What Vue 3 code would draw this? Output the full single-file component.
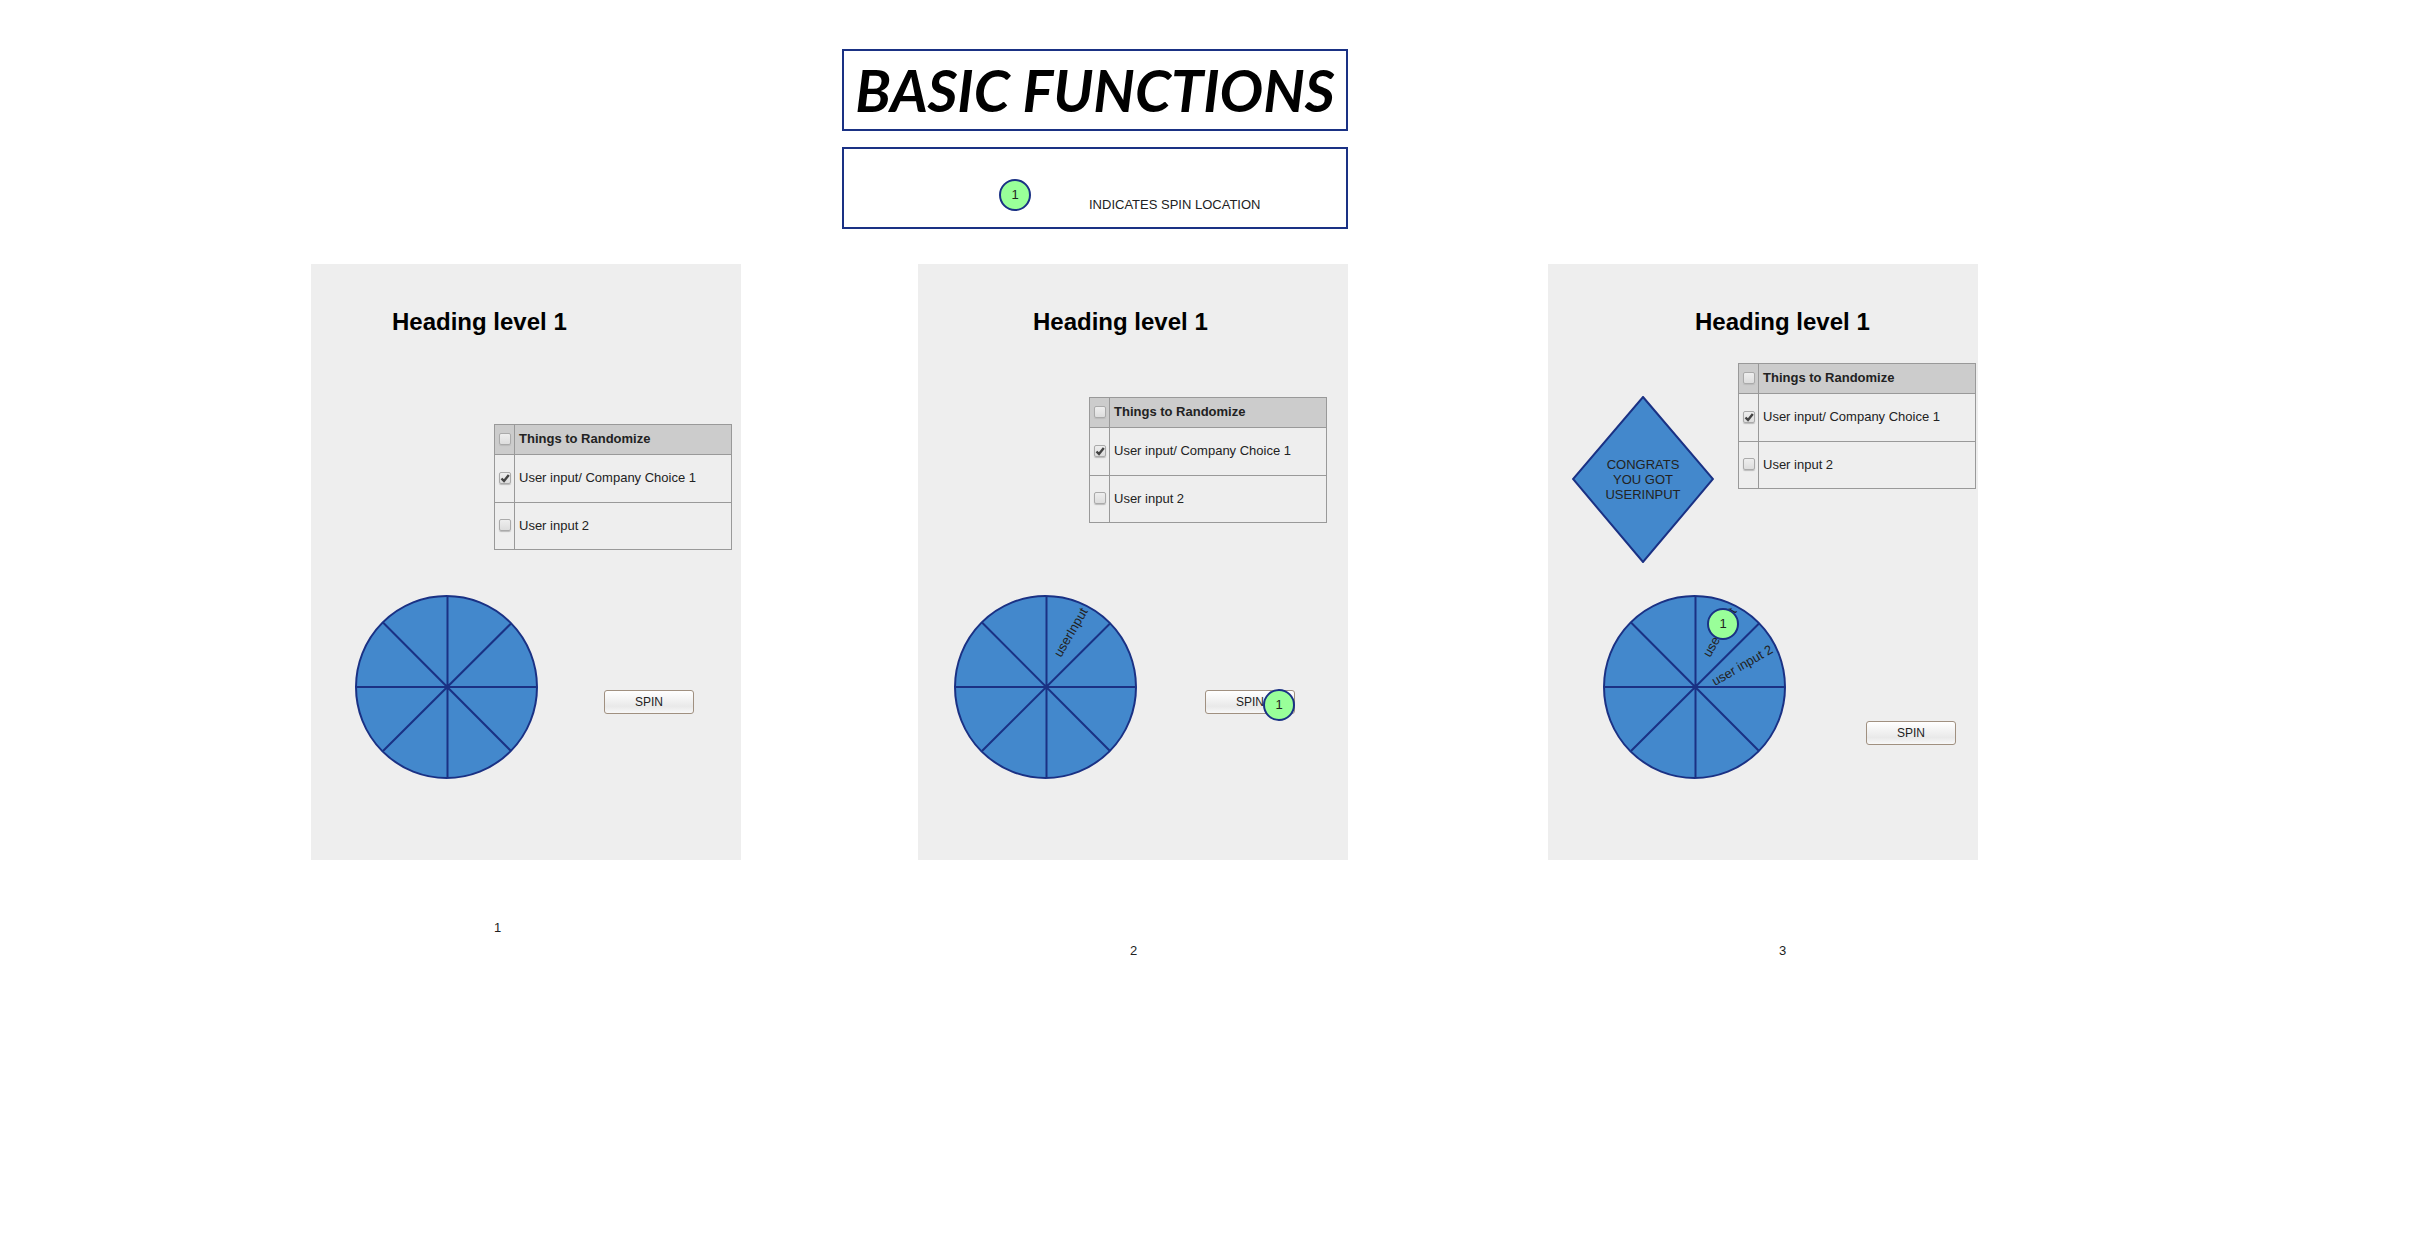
<script setup>
const panels = [
  { id: 1, slices: [], result: null, wheelPin: false, buttonPin: false },
  { id: 2, slices: ['first'], result: null, wheelPin: false, buttonPin: true },
  {
    id: 3,
    slices: ['first', 'second'],
    result: ['CONGRATS', 'YOU GOT', 'USERINPUT'],
    wheelPin: true,
    buttonPin: false,
  },
]

const choices = [
  { key: 'a', label: 'User input/ Company Choice 1', checked: true },
  { key: 'b', label: 'User input 2', checked: false },
]
</script>

<template>
  <main class="board">
    <header class="top">
      <div class="box title-box">
        <h1 class="title">BASIC FUNCTIONS</h1>
      </div>
      <div class="box legend">
        <span class="pin">1</span>
        <span class="legend-text">INDICATES SPIN LOCATION</span>
      </div>
    </header>

    <div class="panels">
      <figure v-for="p in panels" :key="p.id" class="figure" :class="'step-' + p.id">
        <section class="panel">
          <h2 class="heading">Heading level 1</h2>

          <div class="upper">
            <svg v-if="p.result" class="diamond" viewBox="0 0 142 167" role="img">
              <polygon points="71,1 141,83 71,166 1,83" />
              <text v-for="(line, i) in p.result" :key="line" x="71" :y="73 + i * 15">{{ line }}</text>
            </svg>

            <table class="table">
              <thead>
                <tr>
                  <th class="tick"><input type="checkbox" aria-label="Select all" /></th>
                  <th class="name" scope="col">Things to Randomize</th>
                </tr>
              </thead>
              <tbody>
                <tr v-for="c in choices" :key="c.key">
                  <td class="tick">
                    <input :id="c.key + p.id" type="checkbox" :checked="c.checked" />
                  </td>
                  <td class="name"><label :for="c.key + p.id">{{ c.label }}</label></td>
                </tr>
              </tbody>
            </table>
          </div>

          <div class="lower">
            <div class="wheel-wrap">
              <svg class="wheel" viewBox="0 0 184 184" role="img">
                <ellipse cx="91.5" cy="92" rx="90.5" ry="91" />
                <path d="M92.5 1V183M1 92H182M28 27.5L156 156M156 28.5L28 156" />
                <text v-if="p.slices.includes('first')" transform="translate(107 63) rotate(-60)">userInput</text>
                <text v-if="p.slices.includes('second')" transform="translate(112 91) rotate(-30)">user input 2</text>
              </svg>
              <span v-if="p.wheelPin" class="pin on-wheel">1</span>
            </div>
            <div class="spin-wrap">
              <button type="button" class="spin">SPIN</button>
              <span v-if="p.buttonPin" class="pin on-button">1</span>
            </div>
          </div>
        </section>
        <figcaption class="caption">{{ p.id }}</figcaption>
      </figure>
    </div>
  </main>
</template>

<style>
body {
  margin: 0;
  background: #fff;
}
</style>

<style scoped>
.board {
  padding: 49px 0;
  font: 13px/16px "Liberation Sans", Arial, sans-serif;
  color: #222;
}

.top {
  display: grid;
  grid-template-columns: 842fr minmax(506px, 506fr) 1082fr;
  row-gap: 16px;
}

.box {
  grid-column: 2;
  box-sizing: border-box;
  height: 82px;
  border: 2px solid #1a3184;
  background: #fff;
  display: flex;
}

.title-box {
  align-items: center;
  justify-content: center;
}

.title {
  margin: 0;
  font: italic bold 58px/72px Lato, sans-serif;
  color: #000;
  white-space: nowrap;
}

.legend {
  align-items: flex-end;
  gap: 58px;
  padding: 0 0 14px 155px;
}

.legend .pin {
  margin-bottom: 2px;
}

.pin {
  box-sizing: border-box;
  width: 32px;
  height: 32px;
  border: 2px solid #1a3184;
  border-radius: 50%;
  background: #99ff99;
  line-height: 28px;
  text-align: center;
}

.panels {
  display: grid;
  grid-template-columns:
    311fr minmax(430px, 430fr) 177fr minmax(430px, 430fr) 200fr minmax(430px, 430fr) 452fr;
  margin-top: 35px;
}

.figure {
  margin: 0;
}

.step-1 {
  grid-column: 2;
  --heading-left: 81px;
  --table-top: 88px;
  --table-right: 9px;
  --wheel-left: 44px;
  --spin-right: 47px;
  --spin-top: 95px;
  --caption-left: 183px;
  --caption-top: 60px;
}

.step-2 {
  grid-column: 4;
  --heading-left: 115px;
  --table-top: 61px;
  --table-right: 21px;
  --wheel-left: 36px;
  --spin-right: 53px;
  --spin-top: 95px;
  --caption-left: 212px;
  --caption-top: 83px;
}

.step-3 {
  grid-column: 6;
  --heading-left: 147px;
  --table-top: 27px;
  --table-right: 2px;
  --wheel-left: 55px;
  --spin-right: 22px;
  --spin-top: 126px;
  --caption-left: 231px;
  --caption-top: 83px;
}

.panel {
  display: flex;
  flex-direction: column;
  padding: 44px 0 81px;
  background: #eee;
}

.heading {
  margin: 0 0 0 var(--heading-left);
  font-size: 24px;
  line-height: 28px;
  color: #000;
}

.upper {
  box-sizing: border-box;
  min-height: 259px;
  display: flex;
  align-items: flex-start;
  padding: var(--table-top) var(--table-right) 0 24px;
}

.diamond {
  width: 142px;
  height: 167px;
  margin-top: 33px;
}

.diamond polygon,
.wheel ellipse {
  fill: #4388cc;
  stroke: #1a3184;
  stroke-width: 2;
}

.diamond text {
  fill: #222;
  text-anchor: middle;
}

.table {
  width: 238px;
  margin-left: auto;
  border-collapse: collapse;
}

.table th,
.table td {
  box-sizing: border-box;
  height: 48px;
  padding: 0;
  border: 1px solid #999;
  text-align: left;
}

.table th {
  height: 30px;
  background: #ccc;
}

.table tr:last-child td {
  height: 47px;
}

.table .tick {
  width: 20px;
  padding-bottom: 2px;
}

.table .name {
  padding: 0 4px 1px;
}

.tick input {
  appearance: none;
  display: block;
  box-sizing: border-box;
  width: 12px;
  height: 12px;
  margin: 0 auto;
  border: 1px solid #aaa;
  border-radius: 2px;
  background: linear-gradient(#eee, #ddd);
  box-shadow: 0 1px 1px #bbb;
}

.tick input:checked {
  background:
    url("data:image/svg+xml,%3Csvg xmlns='http://www.w3.org/2000/svg' viewBox='0 0 10 10'%3E%3Cpath d='M1.5 5.5L4 8L8.8 2' fill='none' stroke='%23444' stroke-width='2.4'/%3E%3C/svg%3E") center / 10px 10px no-repeat,
    linear-gradient(#eee, #ddd);
}

.lower {
  display: flex;
  align-items: flex-start;
  justify-content: space-between;
  padding: 0 var(--spin-right) 0 var(--wheel-left);
}

.wheel-wrap,
.spin-wrap {
  position: relative;
}

.spin-wrap {
  margin-top: var(--spin-top);
}

.wheel {
  display: block;
  width: 184px;
  height: 184px;
}

.wheel path {
  fill: none;
  stroke: #1a3184;
  stroke-width: 2;
}

.wheel text {
  fill: #222;
}

.on-wheel {
  position: absolute;
  left: 104px;
  top: 13px;
}

.on-button {
  position: absolute;
  right: 0;
  top: -1px;
}

.spin {
  display: block;
  box-sizing: border-box;
  width: 90px;
  height: 24px;
  padding: 0;
  border: 1px solid #a09080;
  border-radius: 3px;
  background: linear-gradient(#fff, #e9e9e9 70%, #f8f8f8);
  font: 12px/22px "Liberation Sans", Arial, sans-serif;
  color: #222;
}

.caption {
  margin: var(--caption-top) 0 0 var(--caption-left);
}
</style>
